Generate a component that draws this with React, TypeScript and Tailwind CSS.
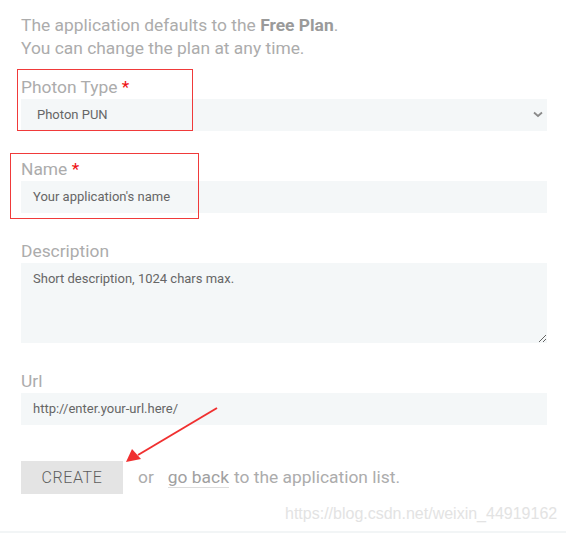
import React from "react";

export default function App() {
  const font = { fontFamily: "Roboto, 'Noto Sans', sans-serif" };
  return (
    <div className="relative w-[566px] h-[533px] bg-white overflow-hidden" style={font}>
      <div className="pl-[21px] pr-[19px] pt-[14px]">
        <p className="text-[17.4px] leading-[23px] text-[#acacac]">
          The application defaults to the <b className="font-bold text-[#9a9a9a]">Free Plan</b>.
          <br />
          You can change the plan at any time.
        </p>

        <div className="mt-[16px] text-[17.4px] leading-[23px] text-[#acacac]">
          Photon Type <span className="text-[#ee1111]">*</span>
        </div>
        <div className="relative h-[32px] bg-[#f4f7f8] flex items-center pl-[16px]">
          <span className="text-[13px] text-[#666]">Photon PUN</span>
          <svg className="absolute right-[4px] top-[12px]" width="10" height="7" viewBox="0 0 10 7">
            <path d="M1 1.5 L5 5 L9 1.5" stroke="#8a8a8a" strokeWidth="1.8" fill="none" />
          </svg>
        </div>

        <div className="mt-[27px] text-[17.4px] leading-[23px] text-[#acacac]">
          Name <span className="text-[#ee1111]">*</span>
        </div>
        <div className="h-[32px] bg-[#f4f7f8] flex items-center pl-[12px]">
          <span className="text-[13px] text-[#666]">Your application's name</span>
        </div>

        <div className="mt-[27px] text-[17.4px] leading-[23px] text-[#acacac]">Description</div>
        <textarea
          className="block w-full h-[80px] bg-[#f4f7f8] pl-[12px] pt-[7px] text-[13px] leading-[18px] text-[#666] placeholder:text-[#666] outline-none resize-y"
          placeholder="Short description, 1024 chars max."
          style={font}
        />

        <div className="mt-[27px] text-[17.4px] leading-[23px] text-[#acacac]">Url</div>
        <div className="h-[32px] bg-[#f4f7f8] flex items-center pl-[12px]">
          <span className="text-[13px] text-[#666]">http://enter.your-url.here/</span>
        </div>

        <div className="mt-[36px] flex items-center text-[17.4px] text-[#acacac]">
          <div className="w-[102px] h-[33px] bg-[#e4e4e4] flex items-center justify-center text-[16px] font-light tracking-[0.6px] text-[#5e5e5e]">
            CREATE
          </div>
          <span className="ml-[15px]">or</span>
          <span className="ml-[14px] text-[#a0a0a0] border-b border-[#dcdcdc] leading-[19px]">go back</span>
          <span className="ml-[5px]">to the application list.</span>
        </div>
      </div>

      <div
        className="absolute left-[285px] top-[503px] text-[16px] leading-[22px] text-[#e3e3e3]"
        style={{ fontFamily: "'Liberation Sans', Arial, sans-serif" }}
      >
        https://blog.csdn.net/weixin_44919162
      </div>

      <div className="absolute left-0 right-0 top-[531px] h-[2px] bg-[#f2f5f6]" />

      <div className="absolute left-[17px] top-[69px] w-[176px] h-[62px] border border-[#f03a3a]" />
      <div className="absolute left-[10px] top-[153px] w-[189px] h-[66px] border border-[#f03a3a]" />

      <svg className="absolute left-0 top-0" width="566" height="533" viewBox="0 0 566 533">
        <path d="M217 408 L138 455" stroke="#f03030" strokeWidth="2" fill="none" />
        <path d="M126 462 L132 449 L141 459 Z" fill="#f03030" />
      </svg>
    </div>
  );
}
